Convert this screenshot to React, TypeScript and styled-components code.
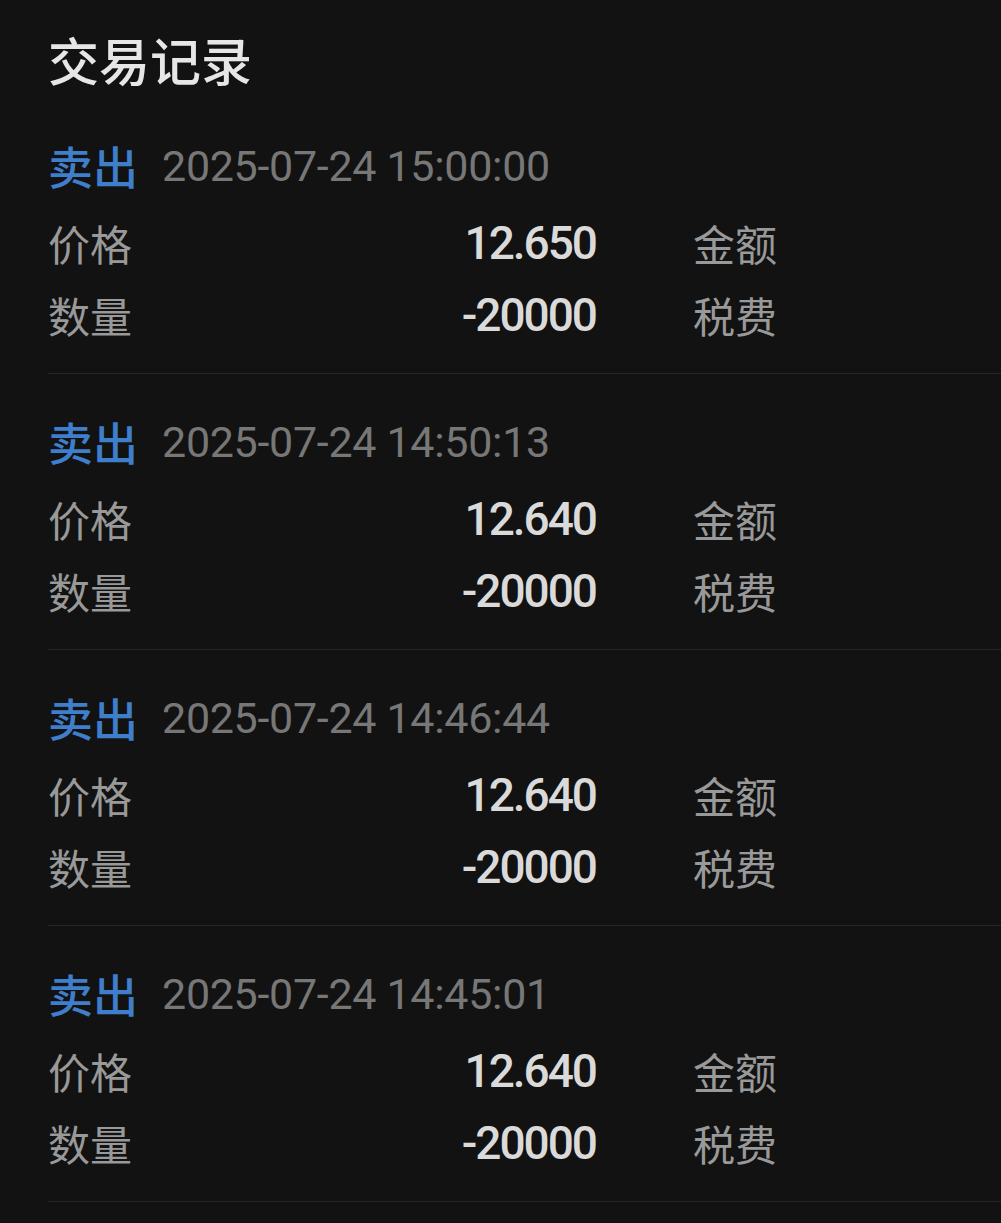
import React from "react";
import styled, { createGlobalStyle } from "styled-components";

const Global = createGlobalStyle`
  html, body { margin: 0; padding: 0; background: #121212; }
  body { font-family: "Noto Sans CJK SC", "Noto Sans", sans-serif; }
`;

const Page = styled.div`
  background: #121212;
  min-height: 1223px;
  padding: 27px 0 0 48px;
  box-sizing: border-box;
  overflow: hidden;
`;

const Title = styled.h1`
  margin: 0 0 7px 0;
  font-size: 51px;
  line-height: 64px;
  font-weight: 500;
  color: #e6e6e6;
  font-family: "Noto Sans CJK SC", sans-serif;
`;

const Section = styled.section`
  padding: 40px 0 22px 0;
  border-bottom: 1px solid #262626;
`;

const Header = styled.div`
  display: flex;
  align-items: center;
  height: 56px;
  margin-bottom: 13px;
`;

const Side = styled.span`
  font-family: "Noto Sans CJK SC", sans-serif;
  font-size: 45px;
  font-weight: 500;
  color: #3f7ecb;
  line-height: 56px;
  margin-right: 24px;
`;

const Time = styled.span`
  font-family: Roboto, "Noto Sans", sans-serif;
  font-size: 43px;
  letter-spacing: -0.3px;
  color: #777777;
  line-height: 56px;
`;

const Row = styled.div`
  display: grid;
  grid-template-columns: 180px 368px 1fr;
  align-items: center;
  height: 72px;
`;

const Label = styled.span<{ $indent?: boolean }>`
  font-family: "Noto Sans CJK SC", sans-serif;
  font-size: 42px;
  color: #999999;
  line-height: 72px;
  padding-left: ${(p) => (p.$indent ? "97px" : "0")};
`;

const Value = styled.span`
  font-family: Roboto, "Noto Sans", sans-serif;
  font-size: 46px;
  font-weight: 500;
  letter-spacing: -2px;
  color: #dadada;
  text-align: right;
  line-height: 72px;
`;

type Trade = { time: string; price: string; qty: string };

const trades: Trade[] = [
  { time: "2025-07-24 15:00:00", price: "12.650", qty: "-20000" },
  { time: "2025-07-24 14:50:13", price: "12.640", qty: "-20000" },
  { time: "2025-07-24 14:46:44", price: "12.640", qty: "-20000" },
  { time: "2025-07-24 14:45:01", price: "12.640", qty: "-20000" },
];

export default function App() {
  return (
    <>
      <Global />
      <Page>
        <Title>交易记录</Title>
        {trades.map((t) => (
          <Section key={t.time}>
            <Header>
              <Side>卖出</Side>
              <Time>{t.time}</Time>
            </Header>
            <Row>
              <Label>价格</Label>
              <Value>{t.price}</Value>
              <Label $indent>金额</Label>
            </Row>
            <Row>
              <Label>数量</Label>
              <Value>{t.qty}</Value>
              <Label $indent>税费</Label>
            </Row>
          </Section>
        ))}
      </Page>
    </>
  );
}
